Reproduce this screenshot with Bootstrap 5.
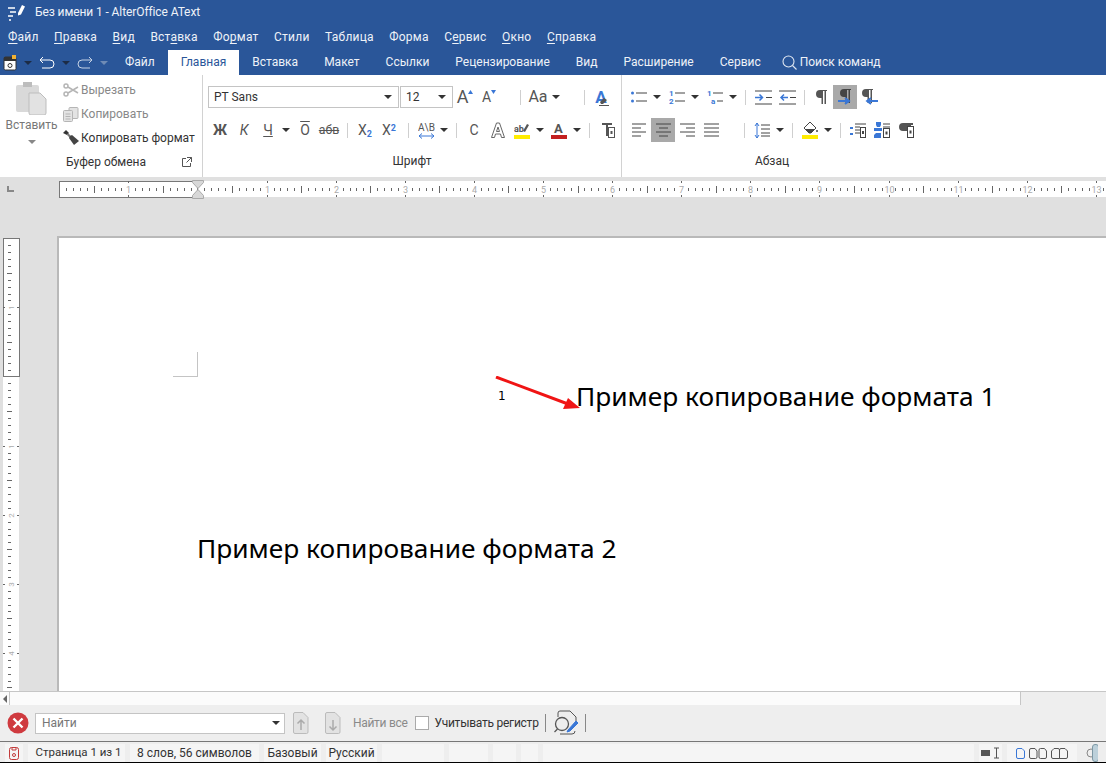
<!DOCTYPE html>
<html lang="ru">
<head>
    <meta charset="UTF-8">
    <meta name="viewport" content="width=device-width, initial-scale=1.0">
    <title>Без имени 1 - AlterOffice AText</title>
    <link href="https://cdn.jsdelivr.net/npm/bootstrap@5.3.0/dist/css/bootstrap.min.css" rel="stylesheet">
    <style>
        html, body { height: 764px; overflow: hidden; }
        body {
            font-family: Roboto, "Noto Sans", sans-serif;
            font-size: 12px;
            letter-spacing: 0;
            background: #fff;
            color: #333;
            line-height: 1.2;
        }
        .ao-window { width: 1106px; height: 764px; }
        .ao-blue { background: #2a5699; color: #eef2f8; }
        .ao-title { height: 25px; padding-left: 8px; gap: 10px; font-size: 12px; letter-spacing: -.1px; }
        .ao-menu { height: 25px; padding-left: 8px; gap: 15.5px; letter-spacing: .22px; }
        .ao-menu u { text-underline-offset: 2px; }
        .ao-tabs { height: 25px; }
        .ao-quick { width: 112px; padding-left: 3px; gap: 5px; }
        .ao-tabs .nav-link {
            height: 25px;
            padding: 0 13px;
            line-height: 25px;
            color: #eef2f8;
            border-radius: 0;
        }
        .ao-tabs .nav-link.active { background: #fff; color: #2a5699; }
        .ao-search { margin-left: 8px; gap: 3px; }

        .ao-ribbon { height: 102px; background: #fff; }
        .ao-group { position: relative; height: 102px; border-right: 1px solid #d2d2d2; }
        .ao-clip { width: 203px; }
        .ao-font { width: 419px; padding-left: 5px; }
        .ao-para { padding-left: 5px; border-right: 0; }
        .ao-r1 { height: 24px; margin-top: 10px; }
        .ao-r2 { height: 24px; margin-top: 9px; }
        .ao-glabel { height: 18px; margin-top: 10px; line-height: 18px; text-align: center; color: #333; }
        .ao-font .ao-glabel { margin-right: 5px; }
        .ao-para .ao-glabel { width: 290px; }

        .ao-ti { width: 24px; height: 24px; flex: none; display: flex; align-items: center; justify-content: center; }
        .ao-ti.on { background: #a9a9a9; }
        .ao-tc { width: 12px; height: 24px; flex: none; display: flex; align-items: center; justify-content: center; }
        .ao-ts { width: 12px; height: 24px; flex: none; display: flex; align-items: center; justify-content: center; }
        .ao-ts::before { content: ""; width: 1px; height: 15px; background: #cfcfcf; }
        .ao-ts.narrow { width: 10px; }
        .ao-ml1 { margin-left: 1px; }
        .ao-ml2 { margin-left: 2px; }
        .ao-ml13 { margin-left: 13px; }
        .ao-ml15 { margin-left: 15px; }
        .ao-ml16 { margin-left: 16px; }
        .ao-ca { width: 0; height: 0; border-left: 4px solid transparent; border-right: 4px solid transparent; border-top: 4px solid #333; display: block; }
        .ao-ca.lite { border-top-color: #6f8bb5; }
        .ao-ca.white { border-top-color: #1c2c46; }
        .ao-ca.grey { border-top-color: #888; }

        .ao-combo { height: 22px; border: 1px solid #c4c4c4; background: #fff; padding: 0 6px 0 5px; color: #333; font-size: 12px; }
        .ao-combo-name { width: 191px; margin-right: 1px; }
        .ao-combo-size { width: 53px; }

        .ao-g { font-size: 14px; color: #555; line-height: 1; }
        .ao-g b { font-weight: 700; }
        .ao-over { text-decoration: overline; }
        .ao-big-a { font-size: 18px; }
        .ao-mid-a { font-size: 14px; }
        .ao-aa { font-size: 16px; }
        .ao-ea { font-size: 17px; font-weight: 700; color: #3a77d6; }
        .ao-up { align-self: flex-start; margin-top: 5px; }
        .ao-ea-mark { align-self: flex-end; margin: 0 0 3px -8px; }
        .ao-sub { font-size: 9px; color: #3a77d6; font-weight: 700; }
        .ao-paste { width: 63px; padding-top: 7px; }
        .ao-paste-l { margin-top: 3px; color: #777; }
        .ao-cliprow { height: 24px; gap: 2px; color: #888; white-space: nowrap; }
        .ao-cliprow.dark { color: #333; }
        .ao-clipcol { padding-top: 3px; }
        .ao-clipfoot { padding: 0 10px 0 66px; margin-top: 3px; height: 18px; }

        .ao-rulerbar { height: 22px; background: #e0e0e0; }
        .ao-rulerbar svg, .ao-vruler svg { display: block; }
        .ao-work { height: 492px; background: #e0e0e0; }
        .ao-vruler { width: 57px; flex: none; padding-top: 39px; }
        .ao-page { flex: 1; margin-top: 37px; background: #fff; border-top: 2px solid #b9b9b9; border-left: 2px solid #b9b9b9; position: relative; overflow: hidden; font-family: "Noto Sans", sans-serif; color: #000; }
        .ao-crop { width: 25px; height: 25px; margin: 114px 0 0 114px; border-right: 1px solid #c4c4c4; border-bottom: 1px solid #c4c4c4; }
        .ao-line1 { margin-top: -1px; padding-left: 439px; align-items: center; height: 40px; }
        .ao-num { font-family: "DejaVu Sans", sans-serif; font-size: 12px; width: 78px; }
        .ao-big { font-size: 26.3px; line-height: 40px; white-space: nowrap; }
        .ao-line2 { margin-top: 112px; padding-left: 138px; }
        .ao-arrow { position: absolute; left: 436px; top: 138px; }

        .ao-hscroll { height: 14px; border-top: 1px solid #c6c6c6; background: #fbfbfb; }
        .ao-hleft { width: 10px; border-right: 1px solid #c6c6c6; color: #666; }
        .ao-hmid { width: 1011px; border-right: 1px solid #c6c6c6; }
        .ao-hend { flex: 1; background: #eee; }

        .ao-find { height: 37px; background: #eee; border-bottom: 1px solid #777; padding-left: 7px; }
        .ao-findbox { width: 250px; height: 21px; margin-left: 6px; border: 1px solid #c4c4c4; background: #fff; padding: 0 4px 0 6px; color: #777; }
        .ao-grey { color: #8a8a8a; }
        .ao-findsep { width: 1px; height: 18px; background: #888; }
        .ao-check.form-check-input[type=checkbox] { width: 14px; height: 14px; margin: 0 0 0 7px; border: 1px solid #aaa; border-radius: 0; flex: none; }
        .ao-navup { margin-left: 8px; }
        .ao-navdn { margin-left: 16px; }
        .ao-fa { margin-left: 12px; letter-spacing: -.3px; }
        .ao-reg { margin-left: 6px; letter-spacing: -.25px; }
        .ao-s1 { margin-left: 6px; }
        .ao-rev { margin-left: 7px; }
        .ao-s2 { margin-left: 6px; }

        .ao-status { height: 21px; background: #eee; border-bottom: 1px solid #000; padding-top: 2px; padding-bottom: 1px; gap: 5px; color: #333; }
        .ao-cell { height: 18px; background: #f5f5f5; display: flex; align-items: center; justify-content: center; white-space: nowrap; flex: none; }
        .ao-page-no { font-size: 11.5px; padding-left: 4px; }
        .ao-w18 { width: 18px; } .ao-w97 { width: 97px; } .ao-w129 { width: 129px; } .ao-w57 { width: 57px; }
        .ao-w51 { width: 51px; } .ao-w62 { width: 62px; } .ao-w39 { width: 39px; } .ao-w23 { width: 23px; }
        .ao-w17 { width: 17px; } .ao-w431 { width: 431px; } .ao-w70 { width: 70px; }
        .ao-st0 { margin-left: 5px; }
    </style>
</head>
<body>
<div class="ao-window d-flex flex-column">

    <!-- заголовок окна -->
    <div class="ao-blue ao-title d-flex align-items-center">
        <svg width="17" height="17" viewBox="0 0 17 17">
            <g fill="none" stroke="#fff" stroke-width="1.6">
                <path d="M0 4h7M2 8h6M0 12h5M1 16h2"/>
            </g>
            <path d="M10 9l4-8 3 1.5-4 8-3 1z" fill="#fff"/>
        </svg>
        <span>Без имени 1 - AlterOffice AText</span>
    </div>

    <!-- меню -->
    <div class="ao-blue ao-menu d-flex align-items-center">
        <span><u>Ф</u>айл</span>
        <span><u>П</u>равка</span>
        <span><u>В</u>ид</span>
        <span>Вст<u>а</u>вка</span>
        <span>Фо<u>р</u>мат</span>
        <span>Стили</span>
        <span>Таблица</span>
        <span>Форма</span>
        <span>С<u>е</u>рвис</span>
        <span><u>О</u>кно</span>
        <span><u>С</u>правка</span>
    </div>

    <!-- вкладки -->
    <div class="ao-blue ao-tabs d-flex align-items-center">
        <div class="ao-quick d-flex align-items-center">
            <svg width="14" height="16" viewBox="0 0 14 16">
                <rect x="1" y="2" width="12" height="13" rx="1.5" fill="#fff" stroke="#333"/>
                <rect x="1" y="2" width="12" height="4" fill="#333"/>
                <rect x="9" y="0" width="4" height="4" fill="#f2b233"/>
                <circle cx="7" cy="10.5" r="2" fill="none" stroke="#333"/>
            </svg>
            <span class="ao-tc"><i class="ao-ca white"></i></span>
            <svg width="16" height="14" viewBox="0 0 16 14" fill="none" stroke="#fff" stroke-width="1"><path d="M1 4h10a3.5 3.5 0 0 1 0 8H3M1 4l3-3M1 4l3 3"/></svg>
            <span class="ao-tc"><i class="ao-ca white"></i></span>
            <svg width="16" height="14" viewBox="0 0 16 14" fill="none" stroke="#c4d1e4" stroke-width="1"><path d="M15 4H5a3.5 3.5 0 0 0 0 8h8M15 4l-3-3M15 4l-3 3"/></svg>
            <span class="ao-tc"><i class="ao-ca lite"></i></span>
        </div>
        <ul class="nav">
            <li class="nav-item"><a class="nav-link" href="#">Файл</a></li>
            <li class="nav-item"><a class="nav-link active" href="#">Главная</a></li>
            <li class="nav-item"><a class="nav-link" href="#">Вставка</a></li>
            <li class="nav-item"><a class="nav-link" href="#">Макет</a></li>
            <li class="nav-item"><a class="nav-link" href="#">Ссылки</a></li>
            <li class="nav-item"><a class="nav-link" href="#">Рецензирование</a></li>
            <li class="nav-item"><a class="nav-link" href="#">Вид</a></li>
            <li class="nav-item"><a class="nav-link" href="#">Расширение</a></li>
            <li class="nav-item"><a class="nav-link" href="#">Сервис</a></li>
        </ul>
        <div class="ao-search d-flex align-items-center">
            <svg width="15" height="15" viewBox="0 0 15 15" fill="none" stroke="#dfe6f1" stroke-width="1.1"><circle cx="6.5" cy="6.5" r="5.5"/><path d="M10.5 10.5l4 4"/></svg>
            <span>Поиск команд</span>
        </div>
    </div>

    <!-- лента -->
    <div class="ao-ribbon d-flex">
        <!-- буфер обмена -->
        <div class="ao-group ao-clip">
            <div class="d-flex">
                <div class="ao-paste d-flex flex-column align-items-center">
                    <svg width="31" height="33" viewBox="0 0 31 33">
                        <rect x="0" y="3" width="23" height="27" rx="2" fill="#d9d9d9"/>
                        <rect x="7" y="0" width="9" height="5" fill="#bdbdbd"/>
                        <path d="M13 11h11l6 6v14a2 2 0 0 1-2 2H15a2 2 0 0 1-2-2z" fill="#e2e2e2" stroke="#bdbdbd"/>
                    </svg>
                    <span class="ao-paste-l">Вставить</span>
                    <i class="ao-ca grey mt-2"></i>
                </div>
                <div class="ao-clipcol">
                    <div class="ao-cliprow d-flex align-items-center">
                        <svg width="16" height="14" viewBox="0 0 16 14" fill="none" stroke="#b5b5b5" stroke-width="1.5"><circle cx="3" cy="3" r="2"/><circle cx="3" cy="11" r="2"/><path d="M5 4l10 6M5 10l10-6"/></svg>
                        <span>Вырезать</span>
                    </div>
                    <div class="ao-cliprow d-flex align-items-center">
                        <svg width="16" height="15" viewBox="0 0 16 15" fill="#e3e3e3" stroke="#b5b5b5"><rect x="6" y=".5" width="9" height="11" rx="1"/><rect x=".5" y="3.5" width="9" height="11" rx="1"/><path d="M2.5 7h5M2.5 9.5h5M2.5 12h5" fill="none"/></svg>
                        <span>Копировать</span>
                    </div>
                    <div class="ao-cliprow dark d-flex align-items-center">
                        <svg width="16" height="16" viewBox="0 0 16 16"><path d="M0 3l3-3 3 3-2 2z" fill="#333"/><path d="M5 3l-1 2 3 3 2-1z" fill="#777"/><path d="M7 6l-1 2 5 7 5-4-7-6z" fill="#444"/></svg>
                        <span>Копировать формат</span>
                    </div>
                </div>
            </div>
            <div class="d-flex align-items-center justify-content-between ao-clipfoot">
                <span>Буфер обмена</span>
                <svg width="10" height="10" viewBox="0 0 10 10" fill="none" stroke="#555"><path d="M4 1.500H.5v8h8V6M5 .5h4.500v4.500M9.500 .5L4.500 5.500"/></svg>
            </div>
        </div>

        <!-- шрифт -->
        <div class="ao-group ao-font">
            <div class="ao-r1 d-flex align-items-center">
                <div class="ao-combo ao-combo-name d-flex align-items-center justify-content-between"><span>PT Sans</span><i class="ao-ca"></i></div>
                <div class="ao-combo ao-combo-size d-flex align-items-center justify-content-between"><span>12</span><i class="ao-ca"></i></div>
                <span class="ao-ti ao-g"><span class="ao-big-a">A</span><svg class="ao-up" width="5" height="4" viewBox="0 0 5 4"><path d="M0 4l2.500-4 2.500 4z" fill="#3a77d6"/></svg></span>
                <span class="ao-ti ao-g"><span class="ao-mid-a">A</span><svg class="ao-up" width="5" height="4" viewBox="0 0 5 4"><path d="M0 0h5l-2.500 4z" fill="#3a77d6"/></svg></span>
                <span class="ao-ts ao-ml13"></span>
                <span class="ao-ti ao-g ao-aa">Aa</span>
                <span class="ao-tc"><i class="ao-ca"></i></span>
                <span class="ao-ts ao-ml16"></span>
                <span class="ao-ti">
                    <span class="ao-ea">A</span>
                    <svg class="ao-ea-mark" width="10" height="9" viewBox="0 0 10 9"><path d="M1 5l4-4 3 2-4 4H2z" fill="#555"/><path d="M0 8.500h10" stroke="#555"/></svg>
                </span>
            </div>
            <div class="ao-r2 d-flex align-items-center">
                <span class="ao-ti ao-g"><b>Ж</b></span>
                <span class="ao-ti ao-g"><i>К</i></span>
                <span class="ao-ti ao-g"><u>Ч</u></span>
                <span class="ao-tc"><i class="ao-ca"></i></span>
                <span class="ao-ti ao-g ao-ml1"><span class="ao-over">О</span></span>
                <span class="ao-ti ao-g"><small class="text-decoration-line-through">абв</small></span>
                <span class="ao-ts"></span>
                <span class="ao-ti ao-g"><span>X<sub class="ao-sub">2</sub></span></span>
                <span class="ao-ti ao-g"><span>X<sup class="ao-sub">2</sup></span></span>
                <span class="ao-ts ao-ml1"></span>
                <span class="ao-ti">
                    <svg width="17" height="17" viewBox="0 0 17 17"><text x="0" y="9" font-family="Roboto" font-size="10" fill="#555">A\B</text><path d="M1 14h15M1 14l3-2.500M1 14l3 2.500M16 14l-3-2.500M16 14l-3 2.500" fill="none" stroke="#3a77d6"/></svg>
                </span>
                <span class="ao-tc"><i class="ao-ca"></i></span>
                <span class="ao-ts"></span>
                <span class="ao-ti ao-g">С</span>
                <span class="ao-ti">
                    <svg width="14" height="16" viewBox="0 0 14 16" fill="none" stroke="#666"><path d="M.5 15.500L5.500 1h3l5 14.500h-3l-1-3.500h-5l-1 3.500zM5.500 9.500L7 5l1.500 4.500z"/></svg>
                </span>
                <span class="ao-ti">
                    <svg width="16" height="17" viewBox="0 0 16 17"><text x="0" y="10" font-family="Roboto" font-size="9" font-weight="700" fill="#555">ab</text><path d="M9 9l4-7 2 1-4 7z" fill="#555"/><rect y="13" width="16" height="4" fill="#ffec00"/></svg>
                </span>
                <span class="ao-tc"><i class="ao-ca"></i></span>
                <span class="ao-ti ao-ml1">
                    <svg width="16" height="17" viewBox="0 0 16 17"><text x="3" y="11" font-family="Roboto" font-size="13" font-weight="700" fill="#555">A</text><rect y="13" width="16" height="4" fill="#c32020"/></svg>
                </span>
                <span class="ao-tc"><i class="ao-ca"></i></span>
                <span class="ao-ts"></span>
                <span class="ao-ti ao-ml1">
                    <svg width="13" height="15" viewBox="0 0 13 15"><path d="M0 0h10v2H6v11H4V2H0z" fill="#555"/><rect x="6.500" y="4.500" width="6" height="10" fill="#fff" stroke="#555"/><rect x="8.500" y="8" width="2" height="3" fill="#555"/></svg>
                </span>
            </div>
            <div class="ao-glabel">Шрифт</div>
        </div>

        <!-- абзац -->
        <div class="ao-group ao-para">
            <div class="ao-r1 d-flex align-items-center">
                <span class="ao-ti"><svg width="16" height="14" viewBox="0 0 16 14"><circle cx="1.500" cy="3" r="1.500" fill="#3a77d6"/><circle cx="1.500" cy="11" r="1.500" fill="#3a77d6"/><path d="M5 3h11M5 11h11" stroke="#444"/></svg></span>
                <span class="ao-tc"><i class="ao-ca"></i></span>
                <span class="ao-ti ao-ml2"><svg width="16" height="16" viewBox="0 0 16 16"><text x="0" y="7" font-family="Roboto" font-size="8" font-weight="700" fill="#3a77d6">1</text><text x="0" y="15" font-family="Roboto" font-size="8" font-weight="700" fill="#3a77d6">2</text><path d="M6 4h10M6 12h10" stroke="#444"/></svg></span>
                <span class="ao-tc"><i class="ao-ca"></i></span>
                <span class="ao-ti ao-ml2"><svg width="16" height="16" viewBox="0 0 16 16"><text x="0" y="7" font-family="Roboto" font-size="8" font-weight="700" fill="#3a77d6">1</text><text x="4" y="15" font-family="Roboto" font-size="8" font-weight="700" fill="#3a77d6">a</text><path d="M6 4h10M10 12h6" stroke="#444"/></svg></span>
                <span class="ao-tc"><i class="ao-ca"></i></span>
                <span class="ao-ts"></span>
                <span class="ao-ti"><svg width="17" height="15" viewBox="0 0 17 15"><path d="M0 1h17M0 14h17M11 7.500h6" stroke="#444" fill="none"/><path d="M0 7.500h7M4.500 4.500l3 3-3 3" stroke="#3a77d6" stroke-width="1.500" fill="none"/></svg></span>
                <span class="ao-ti"><svg width="17" height="15" viewBox="0 0 17 15"><path d="M0 1h17M0 14h17M11 7.500h6" stroke="#444" fill="none"/><path d="M9 7.500H2M5 4.500l-3 3 3 3" stroke="#3a77d6" stroke-width="1.500" fill="none"/></svg></span>
                <span class="ao-ts narrow"></span>
                <span class="ao-ti"><svg width="12" height="14" viewBox="0 0 12 14"><path d="M5 0h7v1h-1v13H9.500V1H8v13H6.500V8H5A4 4 0 0 1 5 0z" fill="#555"/></svg></span>
                <span class="ao-ti on"><svg width="16" height="17" viewBox="0 0 16 17"><path d="M7 0h7v1h-1v13h-1.500V1H10v13H8.500V8H7A4 4 0 0 1 7 0z" fill="#444"/><path d="M1 12h11M8 9l4 3-4 3" stroke="#3a77d6" stroke-width="2" fill="none"/></svg></span>
                <span class="ao-ti"><svg width="17" height="17" viewBox="0 0 17 17"><path d="M5 0h7v1h-1v13H9.500V1H8v13H6.500V8H5A4 4 0 0 1 5 0z" fill="#555"/><path d="M17 12H7M10 9l-4 3 4 3" stroke="#3a77d6" stroke-width="1.800" fill="none"/></svg></span>
            </div>
            <div class="ao-r2 d-flex align-items-center">
                <span class="ao-ti"><svg width="15" height="14" viewBox="0 0 15 14" stroke="#444"><path d="M0 1h14M0 5h9M0 9h14M0 13h9"/></svg></span>
                <span class="ao-ti on"><svg width="15" height="14" viewBox="0 0 15 14" stroke="#444"><path d="M0 1h15M3 5h9M0 9h15M3 13h9"/></svg></span>
                <span class="ao-ti"><svg width="15" height="14" viewBox="0 0 15 14" stroke="#444"><path d="M0 1h15M6 5h9M0 9h15M6 13h9"/></svg></span>
                <span class="ao-ti"><svg width="15" height="14" viewBox="0 0 15 14" stroke="#444"><path d="M0 1h15M0 5h15M0 9h15M0 13h15"/></svg></span>
                <span class="ao-ts ao-ml15"></span>
                <span class="ao-ti"><svg width="16" height="17" viewBox="0 0 16 17"><path d="M3 1v15M1 4l2-3 2 3M1 13l2 3 2-3" stroke="#3a77d6" fill="none"/><path d="M7 3h9M7 7h9M7 11h9M7 14h9" stroke="#444"/></svg></span>
                <span class="ao-tc"><i class="ao-ca"></i></span>
                <span class="ao-ts"></span>
                <span class="ao-ti"><svg width="16" height="18" viewBox="0 0 16 18"><path d="M8 1l6 6-5 5H7L2 7z" fill="#fff" stroke="#444"/><path d="M3 8h10l-4 4H7z" fill="#444"/><circle cx="15" cy="10" r="1" fill="#444"/><rect y="14" width="16" height="4" fill="#ffec00"/></svg></span>
                <span class="ao-tc"><i class="ao-ca"></i></span>
                <span class="ao-ts"></span>
                <span class="ao-ti"><svg width="16" height="15" viewBox="0 0 16 15"><path d="M5 1h11M5 4h5M5 7h5M5 10h5" stroke="#444"/><rect x="0" y="4" width="3" height="2" fill="#3a77d6"/><rect x="0" y="10" width="3" height="2" fill="#3a77d6"/><rect x="10.500" y="4.500" width="5" height="10" fill="#fff" stroke="#444"/><rect x="12" y="8" width="2" height="3" fill="#444"/></svg></span>
                <span class="ao-ti"><svg width="16" height="16" viewBox="0 0 16 16"><path d="M2 0h5v3l-1 2H3L2 3zM0 6h8v3H0zM2 11h5v5H0v-3z" fill="#3a77d6"/><path d="M9 2h7M9 5h7" stroke="#444"/><rect x="9.500" y="6.500" width="6" height="9" fill="#fff" stroke="#444"/><rect x="11.500" y="9.500" width="2" height="3" fill="#444"/></svg></span>
                <span class="ao-ti"><svg width="15" height="15" viewBox="0 0 15 15"><path d="M4 0h10v2h-2v2H9v4H4a4 4 0 0 1 0-8z" fill="#555"/><rect x="8.500" y="3.500" width="6" height="11" fill="#fff" stroke="#444"/><rect x="10.500" y="7.500" width="2" height="3" fill="#444"/></svg></span>
            </div>
            <div class="ao-glabel">Абзац</div>
        </div>
    </div>

    <!-- линейка -->
    <div class="ao-rulerbar" id="hruler"></div>

    <!-- рабочая область -->
    <div class="ao-work d-flex">
        <div class="ao-vruler" id="vruler"></div>
        <div class="ao-page">
            <div class="ao-crop"></div>
            <div class="ao-line1 d-flex">
                <span class="ao-num">1</span>
                <span class="ao-big">Пример копирование формата 1</span>
            </div>
            <div class="ao-line2 ao-big">Пример копирование формата 2</div>
            <svg class="ao-arrow" width="90" height="40" viewBox="0 0 90 40">
                <path d="M1 1L77 29.500" stroke="#f01414" stroke-width="3" fill="none"/>
                <path d="M85 32L68 33L73 22z" fill="#f01414"/>
            </svg>
        </div>
    </div>

    <!-- горизонтальная прокрутка -->
    <div class="ao-hscroll d-flex">
        <div class="ao-hleft d-flex align-items-center justify-content-center"><svg width="4" height="8" viewBox="0 0 4 8"><path d="M4 0v8L0 4z" fill="#666"/></svg></div>
        <div class="ao-hmid"></div>
        <div class="ao-hend"></div>
    </div>

    <!-- панель поиска -->
    <div class="ao-find d-flex align-items-center">
        <svg width="22" height="22" viewBox="0 0 22 22"><circle cx="11" cy="11" r="10.500" fill="#cf3a3f"/><path d="M6.500 6.500l9 9M15.500 6.500l-9 9" stroke="#fff" stroke-width="2.400"/></svg>
        <div class="ao-findbox d-flex align-items-center justify-content-between"><span>Найти</span><i class="ao-ca"></i></div>
        <svg class="ao-navup" width="16" height="22" viewBox="0 0 16 22" fill="#e2e2e2" stroke="#bbb"><path d="M.5 2A1.500 1.500 0 0 1 2 .5h8l5 5V20a1.500 1.500 0 0 1-1.500 1.500H2A1.500 1.500 0 0 1 .5 20z"/><path d="M8 18V8M4.500 11.500L8 8l3.500 3.500" fill="none" stroke="#aaa" stroke-width="1.500"/></svg>
        <svg class="ao-navdn" width="16" height="22" viewBox="0 0 16 22" fill="#e2e2e2" stroke="#bbb"><path d="M.5 2A1.500 1.500 0 0 1 2 .5h8l5 5V20a1.500 1.500 0 0 1-1.500 1.500H2A1.500 1.500 0 0 1 .5 20z"/><path d="M8 8v10M4.500 14.500L8 18l3.500-3.500" fill="none" stroke="#aaa" stroke-width="1.500"/></svg>
        <span class="ao-grey ao-fa">Найти все</span>
        <input class="form-check-input ao-check" type="checkbox">
        <label class="ao-reg">Учитывать регистр</label>
        <span class="ao-findsep ao-s1"></span>
        <svg class="ao-rev" width="26" height="26" viewBox="0 0 26 26" fill="none" stroke="#555"><path d="M5 7V3a2 2 0 0 1 2-2h10l6 6v4M7 24h12a3 3 0 0 0 3-3"/><circle cx="9" cy="14" r="6.500" stroke-width="1.300"/><path d="M4.500 19l-3 3" stroke-width="1.300"/><path d="M15 20l8-9 2 2-8 8-3 1z" fill="#3a77d6" stroke="#3a77d6"/></svg>
        <span class="ao-findsep ao-s2"></span>
    </div>

    <!-- строка состояния -->
    <div class="ao-status d-flex">
        <span class="ao-cell ao-w18 ao-st0"><svg width="10" height="13" viewBox="0 0 10 13" fill="none" stroke="#c23b3b"><rect x=".5" y=".5" width="9" height="12" rx="2"/><path d="M3 .5V3h4V.5"/><circle cx="5" cy="8" r="1.500"/></svg></span>
        <span class="ao-cell ao-w97 ao-page-no">Страница 1 из 1</span>
        <span class="ao-cell ao-w129">8 слов, 56 символов</span>
        <span class="ao-cell ao-w57">Базовый</span>
        <span class="ao-cell ao-w51">Русский</span>
        <span class="ao-cell ao-w62"></span>
        <span class="ao-cell ao-w39"></span>
        <span class="ao-cell ao-w23"></span>
        <span class="ao-cell ao-w17"></span>
        <span class="ao-cell ao-w431"></span>
        <span class="ao-cell ao-w23"><svg width="20" height="12" viewBox="0 0 20 12"><rect y="3" width="9" height="6" fill="#555"/><path d="M13 1h5M15.500 1v10M13 11h5" stroke="#555" fill="none"/></svg></span>
        <span class="ao-cell ao-w70 gap-1">
            <svg width="9" height="11" viewBox="0 0 9 11" fill="none" stroke="#3a77d6"><path d="M.5 2A1.500 1.500 0 0 1 2 .5h4L8.500 3v6A1.500 1.500 0 0 1 7 10.500H2A1.500 1.500 0 0 1 .5 9z"/></svg>
            <svg width="18" height="11" viewBox="0 0 18 11" fill="none" stroke="#555"><path d="M.5 2A1.500 1.500 0 0 1 2 .5h4L8 3v6a1.500 1.500 0 0 1-1.500 1.500H2A1.500 1.500 0 0 1 .5 9zM10 2a1.500 1.500 0 0 1 1.500-1.500h4L17.500 3v6a1.500 1.500 0 0 1-1.500 1.500h-4.500A1.500 1.500 0 0 1 10 9z"/></svg>
            <svg width="17" height="11" viewBox="0 0 17 11" fill="none" stroke="#555"><path d="M8.500 10.500H2A1.500 1.500 0 0 1 .5 9V3L3 .5h4A1.500 1.500 0 0 1 8.500 2zM8.500 10.500H15A1.500 1.500 0 0 0 16.500 9V3L14 .5h-4A1.500 1.500 0 0 0 8.500 2z"/></svg>
        </span>
        <svg width="16" height="18" viewBox="0 0 16 18"><circle cx="9" cy="9" r="4" fill="none" stroke="#888"/><rect x="10.500" y=".5" width="6" height="17" rx="2.500" fill="#bcd0da" stroke="#7d98a5"/></svg>
    </div>
</div>

<script>
    // линейки рисуем циклом, деления повторяются
    function tick(x1, y1, x2, y2, c) {
        return '<line x1="' + x1 + '" y1="' + y1 + '" x2="' + x2 + '" y2="' + y2 + '" stroke="' + (c || '#666') + '"/>';
    }
    function label(x, y, t) {
        return '<text x="' + x + '" y="' + y + '" font-family="Roboto" font-size="9" fill="#aaa" text-anchor="middle">' + t + '</text>';
    }
    var unit = 69.1, origin = 197.5, h = '';
    h += '<rect x="60" y="4" width="1046" height="16" fill="#fff"/>';
    h += '<rect x="59.500" y="4.500" width="138" height="16" fill="#fff" stroke="#777"/>';
    for (var i = -2; i <= 13; i++) {
        var x0 = origin + i * unit;
        for (var k = 1; k < 10; k++) {
            var x = Math.round(x0 + k * unit / 10) + .5;
            if (x < 62 || x > 1105) continue;
            h += k == 5 ? tick(x, 9, x, 16) : tick(x, 11, x, 14);
        }
        if (i !== 0) {
            var mx = Math.round(x0) + .5;
            if (mx > 62 && mx < 1100) {
                h += tick(mx, 4, mx, 6) + tick(mx, 18, mx, 20);
                h += label(mx, 15.500, Math.abs(i));
            }
        }
    }
    h += '<path d="M192.500 3.500h11v2l-5.500 6-5.500-6zM192.500 21.500v-3l5.500-6 5.500 6v3z" fill="#d8d8d8" stroke="#aaa"/>';
    h += '<path d="M8 9v5h6" fill="none" stroke="#888" stroke-width="2"/>';
    document.getElementById('hruler').innerHTML = '<svg width="1106" height="22">' + h + '</svg>';

    var v = '', vorigin = 138.5;
    v += '<rect x="3" y="0" width="16" height="453" fill="#fff"/>';
    v += '<rect x="3.500" y=".5" width="16" height="138" fill="#fff" stroke="#777"/>';
    for (var j = -2; j <= 5; j++) {
        var y0 = vorigin + j * unit;
        for (var m = 1; m < 10; m++) {
            var y = Math.round(y0 + m * unit / 10) + .5;
            if (y < 2 || y > 453) continue;
            v += m == 5 ? tick(7, y, 12, y) : tick(8, y, 11, y);
        }
        if (j !== 0) {
            var my = Math.round(y0) + .5;
            if (my < 8 || my > 445) continue;
            v += tick(3, my, 5, my) + tick(17, my, 19, my);
            v += '<text x="11" y="' + (my + 3) + '" font-family="Roboto" font-size="8" fill="#aaa" text-anchor="middle" transform="rotate(-90 11 ' + my + ')">' + Math.abs(j) + '</text>';
        }
    }
    document.getElementById('vruler').innerHTML = '<svg width="20" height="453">' + v + '</svg>';
</script>
<script src="https://cdn.jsdelivr.net/npm/bootstrap@5.3.0/dist/js/bootstrap.bundle.min.js"></script>
</body>
</html>
